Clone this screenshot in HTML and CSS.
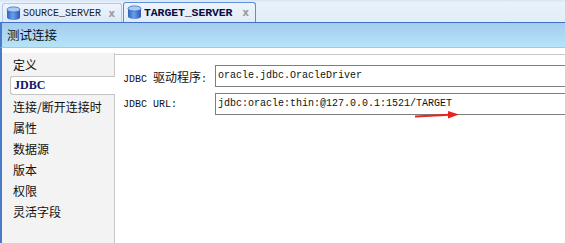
FILE: index.html
```html
<!DOCTYPE html>
<html lang="zh">
<head>
  <meta charset="UTF-8">
  <title>测试连接</title>
  <link rel="stylesheet" href="styles.css">
</head>
<body>

  <div class="tabs">
    <div class="tab">
      <svg class="db-icon" width="15" height="15" viewBox="0 0 15 15">
        <defs>
          <linearGradient id="dbBody" x1="0" x2="1" y1="0" y2="0">
            <stop offset="0" stop-color="#2f64bf"/>
            <stop offset="0.45" stop-color="#6aa0ea"/>
            <stop offset="1" stop-color="#2a58ad"/>
          </linearGradient>
        </defs>
        <path d="M1 3.5 V11.5 A6.5 2.6 0 0 0 14 11.5 V3.5 Z" fill="url(#dbBody)"/>
        <ellipse cx="7.5" cy="3.5" rx="6.5" ry="2.6" fill="#a9ccf5" stroke="#3a6cc2" stroke-width="0.8"/>
      </svg>
      <span class="tab-name">SOURCE_SERVER</span>
      <span class="tab-close">x</span>
    </div>
    <div class="tab active">
      <svg class="db-icon" width="15" height="15" viewBox="0 0 15 15">
        <path d="M1 3.5 V11.5 A6.5 2.6 0 0 0 14 11.5 V3.5 Z" fill="url(#dbBody)"/>
        <ellipse cx="7.5" cy="3.5" rx="6.5" ry="2.6" fill="#a9ccf5" stroke="#3a6cc2" stroke-width="0.8"/>
      </svg>
      <span class="tab-name">TARGET_SERVER</span>
      <span class="tab-close">x</span>
    </div>
  </div>

  <div class="header">测试连接</div>

  <div class="content">
    <ul class="side-menu">
      <li>定义</li>
      <li class="selected">JDBC</li>
      <li>连接/断开连接时</li>
      <li>属性</li>
      <li>数据源</li>
      <li>版本</li>
      <li>权限</li>
      <li>灵活字段</li>
    </ul>

    <div class="form-panel">
      <div class="form-row">
        <label>JDBC <span class="cjk">驱动程序</span>:</label>
        <div class="field">oracle.jdbc.OracleDriver</div>
      </div>
      <div class="form-row">
        <label>JDBC URL:</label>
        <div class="field">jdbc:oracle:thin:@127.0.0.1:1521/TARGET</div>
      </div>
    </div>
  </div>

  <svg class="red-arrow" width="48" height="12" viewBox="0 0 48 12">
    <path d="M1 7.5 L36 5.8" stroke="#e8241c" stroke-width="2" fill="none"/>
    <path d="M34 2 L45 5.5 L34 9.5 Z" fill="#e8241c"/>
  </svg>

</body>
</html>
```

FILE: styles.css
```css
body {
  margin: 0;
  width: 565px;
  height: 243px;
  overflow: hidden;
  background: #fff;
  position: relative;
  font-family: "Noto Sans CJK SC", sans-serif;
}

.tabs {
  display: flex;
  align-items: flex-end;
  height: 23px;
  padding-left: 2px;
  background: linear-gradient(#d9e7f7 0, #d9e7f7 1px, #e9f1fa 2px, #e2edf8 100%);
  border-bottom: 1px solid #3f70c4;
  box-sizing: border-box;
}

.tab {
  display: flex;
  align-items: center;
  height: 19px;
  padding: 0 6px 0 3px;
  border: 1px solid #b3cae8;
  border-bottom: none;
  border-radius: 3px 3px 0 0;
  background: linear-gradient(#eef4fc, #dde9f7);
  box-sizing: border-box;
  width: 120px;
}

.tab.active {
  height: 20px;
  width: 133px;
  margin-left: 1px;
  border-color: #5d8ed6;
  background: linear-gradient(#edf4fc, #e2ecf9);
}

.db-icon {
  flex: none;
  margin-right: 2px;
}

.tab-name {
  font-family: "Liberation Mono", monospace;
  font-size: 10px;
  color: #222;
  flex: 1;
}

.tab.active .tab-name {
  font-weight: bold;
  font-size: 11.5px;
  color: #0c0c3c;
  letter-spacing: -0.1px;
}

.tab-close {
  font-family: "DejaVu Sans", sans-serif;
  font-size: 10px;
  font-weight: bold;
  color: #9a9a9a;
}

.header {
  height: 24px;
  line-height: 24px;
  padding-left: 5px;
  font-size: 12.5px;
  color: #111;
  background: linear-gradient(#a5ccee, #b5e4f8);
  border-left: 2px solid #4a7bc8;
  border-bottom: 1px solid #9cc9ec;
}

.content {
  display: flex;
  height: 200px;
  border-left: 2px solid #4a7bc8;
  padding-top: 5px;
}

.side-menu {
  list-style: none;
  margin: 0;
  padding: 1px 0 0 8px;
  width: 104px;
  flex: none;
  background: #f3f3f3;
  border-right: 1px solid #c9c9c9;
}

.side-menu li {
  height: 21px;
  line-height: 21px;
  padding-left: 3px;
  font-size: 12px;
  color: #111;
  white-space: nowrap;
}

.side-menu li.selected {
  height: 19px;
  line-height: 17px;
  margin: 1px -1px 1px 0;
  position: relative;
  background: #fff;
  border: 1px solid #c4c4c4;
  border-right: none;
  border-radius: 3px 0 0 3px;
  font-family: "Liberation Serif", serif;
  font-weight: bold;
  font-size: 12px;
  color: #14146a;
  box-sizing: border-box;
}

.form-panel {
  flex: 1;
  min-width: 0;
  margin-top: 1px;
  border-top: 1px solid #c9c9c9;
  padding: 10px 0 0 8px;
}

.form-row {
  display: flex;
  align-items: center;
  height: 22px;
  margin-bottom: 6px;
}

.form-row label {
  width: 92px;
  flex: none;
  font-family: "Liberation Mono", monospace;
  font-size: 10px;
  color: #111;
}

.form-row label .cjk {
  font-family: "Noto Sans CJK SC", sans-serif;
  font-size: 12px;
}

.field {
  flex: 1;
  min-width: 0;
  height: 22px;
  line-height: 20px;
  padding-left: 2px;
  border: 1px solid #7d7d7d;
  border-right: none;
  box-sizing: border-box;
  font-family: "Liberation Mono", monospace;
  font-size: 10px;
  color: #111;
  white-space: nowrap;
}

.red-arrow {
  position: absolute;
  left: 414px;
  top: 109px;
}
```
